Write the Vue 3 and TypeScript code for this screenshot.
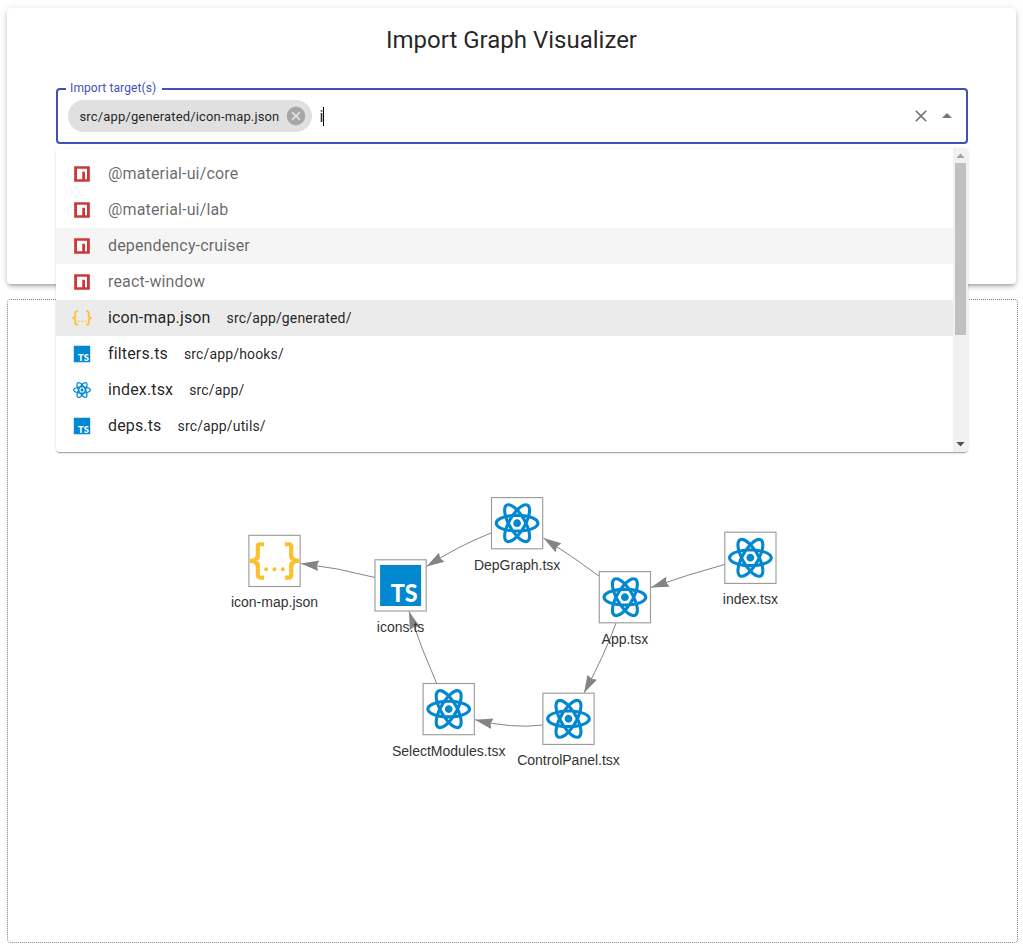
<script setup lang="ts">
type IconKind = 'npm' | 'json' | 'ts' | 'react'

interface Option {
  name: string
  dir?: string
  icon: IconKind
  state?: 'hover' | 'selected'
}

interface GraphNode {
  label: string
  icon: IconKind
  x: number
  y: number
}

interface Edge {
  from: [number, number]
  control: [number, number]
  tip: [number, number]
  back: [number, number]
}

const options: Option[] = [
  { name: '@material-ui/core', icon: 'npm' },
  { name: '@material-ui/lab', icon: 'npm' },
  { name: 'dependency-cruiser', icon: 'npm', state: 'hover' },
  { name: 'react-window', icon: 'npm' },
  { name: 'icon-map.json', dir: 'src/app/generated/', icon: 'json', state: 'selected' },
  { name: 'filters.ts', dir: 'src/app/hooks/', icon: 'ts' },
  { name: 'index.tsx', dir: 'src/app/', icon: 'react' },
  { name: 'deps.ts', dir: 'src/app/utils/', icon: 'ts' },
]

const nodes: GraphNode[] = [
  { label: 'icon-map.json', icon: 'json', x: 274.5, y: 560.9 },
  { label: 'icons.ts', icon: 'ts', x: 400.6, y: 585.4 },
  { label: 'DepGraph.tsx', icon: 'react', x: 517.1, y: 523.2 },
  { label: 'App.tsx', icon: 'react', x: 624.9, y: 597.2 },
  { label: 'index.tsx', icon: 'react', x: 750.4, y: 557.8 },
  { label: 'SelectModules.tsx', icon: 'react', x: 448.7, y: 709.1 },
  { label: 'ControlPanel.tsx', icon: 'react', x: 568.5, y: 718.8 },
]

const edges: Edge[] = [
  { from: [375, 577.5], control: [337, 567.5], tip: [301, 563.5], back: [317, 565.5] },
  { from: [491, 533], control: [457, 546.5], tip: [426.5, 566.5], back: [440.5, 558] },
  { from: [599, 576], control: [572, 556], tip: [543.5, 538], back: [557.7, 547.2] },
  { from: [724.5, 564.5], control: [688, 574.5], tip: [651, 587.5], back: [667.5, 581.9] },
  { from: [616, 623], control: [605, 654], tip: [584, 693], back: [592, 677.6] },
  { from: [543, 725], control: [512, 729], tip: [475, 719.7], back: [491.5, 723.6] },
  { from: [436.5, 683], control: [421, 648], tip: [409, 611.5], back: [414.6, 627.7] },
]

// Notched arrow head: 17px long, 0.3 of the length to each side.
function arrow(e: Edge): string {
  const angle = Math.atan2(e.tip[1] - e.back[1], e.tip[0] - e.back[0])
  const len = 17.8
  const c = Math.cos(angle)
  const s = Math.sin(angle)
  return [[0, 0], [-1, 0.3], [-0.9, 0], [-1, -0.3]]
    .map(([a, b]) => `${e.tip[0] + len * (a * c - b * s)},${e.tip[1] + len * (a * s + b * c)}`)
    .join(' ')
}
</script>

<template>
  <main class="page">
    <svg class="defs" width="0" height="0" aria-hidden="true">
      <symbol id="icon-npm" viewBox="0 0 24 24">
        <path fill="#cb3837" d="M2.6 2.6h18.8v18.8H2.6z" />
        <path fill="#fff" d="M6 5.8h12v12.4h-2.4V9.2h-3.3v9H6z" />
      </symbol>
      <symbol id="icon-json" viewBox="0 0 24 24">
        <path
          fill="#fbc02d"
          d="M5 3h2v2H5v5a2 2 0 0 1-2 2 2 2 0 0 1 2 2v5h2v2H5c-1.07-.27-2-.9-2-2v-4a2 2 0 0 0-2-2H0v-2h1a2 2 0 0 0 2-2V5a2 2 0 0 1 2-2m14 0a2 2 0 0 1 2 2v4a2 2 0 0 0 2 2h1v2h-1a2 2 0 0 0-2 2v4a2 2 0 0 1-2 2h-2v-2h2v-5a2 2 0 0 1 2-2 2 2 0 0 1-2-2V5h-2V3h2m-7 12a1 1 0 0 1 1 1 1 1 0 0 1-1 1 1 1 0 0 1-1-1 1 1 0 0 1 1-1m-4 0a1 1 0 0 1 1 1 1 1 0 0 1-1 1 1 1 0 0 1-1-1 1 1 0 0 1 1-1m8 0a1 1 0 0 1 1 1 1 1 0 0 1-1 1 1 1 0 0 1-1-1 1 1 0 0 1 1-1z"
        />
      </symbol>
      <symbol id="icon-ts" viewBox="0 0 24 24">
        <path fill="#0288d1" d="M2.15 2.15h19.7v19.7H2.15z" />
      </symbol>
      <symbol id="icon-react" viewBox="0 0 24 24">
        <path
          fill="#0288d1"
          fill-rule="evenodd"
          d="M12 10.11c1.03 0 1.87.84 1.87 1.89 0 1-.84 1.85-1.87 1.85S10.13 13 10.13 12c0-1.05.84-1.89 1.87-1.89M7.37 20c.63.38 2.01-.2 3.6-1.7-.52-.59-1.03-1.23-1.51-1.9a22.7 22.7 0 0 1-2.4-.36c-.51 2.14-.32 3.61.31 3.96m.71-5.74l-.29-.51c-.11.29-.22.58-.29.86.27.06.57.11.88.16l-.3-.51m6.54-.76l.81-1.5-.81-1.5c-.3-.53-.62-1-.91-1.47C13.17 9 12.6 9 12 9c-.6 0-1.17 0-1.71.03-.29.47-.61.94-.91 1.47L8.57 12l.81 1.5c.3.53.62 1 .91 1.47.54.03 1.11.03 1.71.03.6 0 1.17 0 1.71-.03.29-.47.61-.94.91-1.47M12 6.78C11.81 7 11.61 7.23 11.41 7.5h1.18C12.39 7.23 12.19 7 12 6.78M12 17.22C12.19 17 12.39 16.77 12.59 16.5h-1.18C11.61 16.77 11.81 17 12 17.22M16.62 4C16 3.62 14.62 4.2 13.03 5.7C13.55 6.29 14.06 6.93 14.54 7.6C15.36 7.68 16.17 7.8 16.94 7.96C17.45 5.82 17.26 4.35 16.62 4M15.92 9.74L16.21 10.25C16.32 9.96 16.43 9.67 16.5 9.39C16.23 9.33 15.93 9.28 15.62 9.23L15.92 9.74M17.37 2.69C18.84 3.53 19 5.74 18.38 8.32C20.92 9.07 22.75 10.31 22.75 12C22.75 13.69 20.92 14.93 18.38 15.68C19 18.26 18.84 20.47 17.37 21.31C15.91 22.15 13.92 21.19 12 19.36C10.08 21.19 8.09 22.15 6.62 21.31C5.16 20.47 5 18.26 5.62 15.68C3.08 14.93 1.25 13.69 1.25 12C1.25 10.31 3.08 9.07 5.62 8.32C5 5.74 5.16 3.53 6.62 2.69C8.09 1.85 10.08 2.81 12 4.64C13.92 2.81 15.91 1.85 17.37 2.69M17.08 12C17.42 12.75 17.72 13.5 17.97 14.26C20.07 13.63 21.25 12.73 21.25 12C21.25 11.27 20.07 10.37 17.97 9.74C17.72 10.5 17.42 11.25 17.08 12M6.92 12C6.58 11.25 6.28 10.5 6.03 9.74C3.93 10.37 2.75 11.27 2.75 12C2.75 12.73 3.93 13.63 6.03 14.26C6.28 13.5 6.58 12.75 6.92 12M15.92 14.26L15.62 14.77C15.93 14.72 16.23 14.67 16.5 14.61C16.43 14.33 16.32 14.04 16.21 13.75L15.92 14.26M13.03 18.3C14.62 19.8 16 20.38 16.62 20C17.26 19.65 17.45 18.18 16.94 16.04C16.17 16.2 15.36 16.32 14.54 16.4C14.06 17.07 13.55 17.71 13.03 18.3M8.08 9.74L8.38 9.23C8.07 9.28 7.77 9.33 7.5 9.39C7.57 9.67 7.68 9.96 7.79 10.25L8.08 9.74M10.97 5.7C9.38 4.2 8 3.62 7.37 4C6.74 4.35 6.55 5.82 7.06 7.96C7.83 7.8 8.64 7.68 9.46 7.6C9.94 6.93 10.45 6.29 10.97 5.7Z"
        />
      </symbol>
    </svg>

    <section class="paper">
      <h1 class="title">Import Graph Visualizer</h1>
      <div class="field">
        <span class="field-label">Import target(s)</span>
        <span class="chip">
          <span class="chip-text">src/app/generated/icon-map.json</span>
          <svg class="chip-delete" viewBox="0 0 24 24">
            <path d="M12 2C6.47 2 2 6.47 2 12s4.47 10 10 10 10-4.47 10-10S17.53 2 12 2zm5 13.59L15.59 17 12 13.41 8.41 17 7 15.59 10.59 12 7 8.41 8.41 7 12 10.59 15.59 7 17 8.41 13.41 12 17 15.59z" />
          </svg>
        </span>
        <span class="typed">i</span>
        <span class="caret"></span>
        <span class="actions">
          <svg class="clear" viewBox="0 0 24 24">
            <path d="M19 6.41L17.59 5 12 10.59 6.41 5 5 6.41 10.59 12 5 17.59 6.41 19 12 13.41 17.59 19 19 17.59 13.41 12z" />
          </svg>
          <svg class="toggle" viewBox="0 0 24 24"><path d="M7 14l5-5 5 5z" /></svg>
        </span>

        <div class="popup">
          <ul class="list">
            <li v-for="option in options" :key="option.name" class="option" :class="option.state">
              <svg class="option-icon" viewBox="0 0 24 24">
                <use :href="`#icon-${option.icon}`" width="24" height="24" />
                <text v-if="option.icon === 'ts'" class="ts" x="7.3" y="19.9" textLength="12.9" lengthAdjust="spacingAndGlyphs">TS</text>
              </svg>
              <span class="option-name" :class="{ muted: option.icon === 'npm' }">{{ option.name }}</span>
              <span v-if="option.dir" class="option-dir">{{ option.dir }}</span>
            </li>
          </ul>
          <div class="scrollbar">
            <svg class="scroll-arrow" viewBox="0 0 15 15"><path fill="#a3a3a3" d="M7.5 5.5l4 4.5h-8z" /></svg>
            <span class="thumb"></span>
            <svg class="scroll-arrow" viewBox="0 0 15 15"><path fill="#505050" d="M7.5 9.5l4-4.5h-8z" /></svg>
          </div>
        </div>
      </div>
    </section>

    <section class="graph">
      <svg class="canvas" width="1009" height="642" viewBox="8 300 1009 642">
        <g v-for="(edge, i) in edges" :key="i">
          <path class="edge" :d="`M${edge.from} Q${edge.control} ${edge.tip}`" />
          <polygon class="arrow" :points="arrow(edge)" />
        </g>
        <g v-for="node in nodes" :key="node.label">
          <rect class="box" :x="node.x - 25.6" :y="node.y - 25.6" width="51.2" height="51.2" />
          <svg :x="node.x - 25" :y="node.y - 25" width="50" height="50" viewBox="0 0 24 24">
            <use :href="`#icon-${node.icon}`" width="24" height="24" />
            <text v-if="node.icon === 'ts'" class="ts" x="7.3" y="19.9" textLength="12.9" lengthAdjust="spacingAndGlyphs">TS</text>
          </svg>
          <text class="node-label" :x="node.x" :y="node.y + 46.4">{{ node.label }}</text>
        </g>
      </svg>
    </section>
  </main>
</template>

<style>
body {
  margin: 0;
  background: #fff;
}
</style>

<style scoped>
.page {
  box-sizing: border-box;
  width: 1023px;
  height: 951px;
  padding: 8px 5px 8px 7px;
  overflow: hidden;
  color: rgba(0, 0, 0, 0.87);
  font-family: Roboto, sans-serif;
}
.defs {
  position: absolute;
}
.paper {
  box-sizing: border-box;
  width: 1009px;
  height: 276px;
  padding: 16px 48px 0 49px;
  border-radius: 4px;
  background: #fff;
  box-shadow: 0 3px 3px -2px rgba(0, 0, 0, 0.2), 0 3px 4px 0 rgba(0, 0, 0, 0.14), 0 1px 8px 0 rgba(0, 0, 0, 0.12);
}
.title {
  margin: 0 1px 32px 0;
  font-size: 24px;
  font-weight: 400;
  line-height: 32px;
  text-align: center;
}
.field {
  position: relative;
  box-sizing: border-box;
  display: flex;
  align-items: center;
  width: 912px;
  height: 56px;
  padding: 0 7px 0 10px;
  border: 2px solid #3f51b5;
  border-radius: 4px;
}
.field-label {
  position: absolute;
  top: -9px;
  left: 8px;
  padding: 0 5.5px 0 4px;
  background: #fff;
  color: #3f51b5;
  font-size: 12px;
  line-height: 14px;
  letter-spacing: 0.00938em;
  white-space: nowrap;
}
.chip {
  display: flex;
  align-items: center;
  width: 244px;
  height: 32px;
  border-radius: 16px;
  background: #e0e0e0;
}
.chip-text {
  width: 199.5px;
  padding-left: 11.5px;
  font-size: 13px;
  letter-spacing: 0.15px;
  white-space: nowrap;
}
.chip-delete {
  width: 22px;
  height: 22px;
  margin-left: 6px;
  fill: rgba(0, 0, 0, 0.26);
}
.typed {
  margin-left: 7.4px;
  font-size: 16px;
}
.caret {
  width: 1px;
  height: 19px;
  background: #000;
}
.actions {
  display: flex;
  align-items: center;
  gap: 4px;
  margin-left: auto;
  fill: rgba(0, 0, 0, 0.54);
}
.clear {
  width: 20px;
  height: 20px;
}
.toggle {
  width: 24px;
  height: 24px;
}
.popup {
  position: absolute;
  z-index: 2;
  top: 58px;
  left: -2px;
  display: flex;
  width: 912px;
  height: 304px;
  overflow: hidden;
  border-radius: 4px;
  background: #fff;
  box-shadow: 0 2px 1px -1px rgba(0, 0, 0, 0.2), 0 1px 1px 0 rgba(0, 0, 0, 0.14), 0 1px 3px 0 rgba(0, 0, 0, 0.12);
}
.list {
  flex: 1;
  margin: 0;
  padding: 8px 0;
  list-style: none;
}
.option {
  display: flex;
  align-items: center;
  height: 36px;
  padding-left: 16px;
}
.option.hover {
  background: #f5f5f5;
}
.option.selected {
  background: #ebebeb;
}
.option-icon {
  width: 20px;
  height: 20px;
  margin-right: 16px;
}
.ts {
  fill: #fff;
  font-family: Lato, sans-serif;
  font-size: 11.4px;
  font-weight: 900;
}
.option-name {
  font-size: 16px;
  line-height: 24px;
  letter-spacing: 0.00938em;
}
.muted {
  color: rgba(0, 0, 0, 0.6);
}
.option-dir {
  margin-left: 16px;
  font-size: 14px;
  line-height: 20px;
  letter-spacing: 0.01071em;
}
.scrollbar {
  display: flex;
  flex-direction: column;
  align-items: center;
  width: 15px;
  background: #f1f1f1;
}
.scroll-arrow {
  width: 15px;
  height: 15px;
}
.thumb {
  width: 11px;
  height: 172px;
  margin-bottom: auto;
  background: #c1c1c1;
}
.graph {
  box-sizing: border-box;
  width: 1011px;
  height: 644px;
  margin-top: 15px;
  border: 1px dotted gray;
  border-radius: 4px;
}
.canvas {
  display: block;
}
.edge {
  fill: none;
  stroke: #848484;
  stroke-width: 1;
}
.arrow {
  fill: #848484;
}
.box {
  fill: #fff;
  stroke: #999;
  stroke-width: 1.1;
}
.node-label {
  fill: #343434;
  font-family: "Liberation Sans", Arial, sans-serif;
  font-size: 14px;
  text-anchor: middle;
}
</style>
